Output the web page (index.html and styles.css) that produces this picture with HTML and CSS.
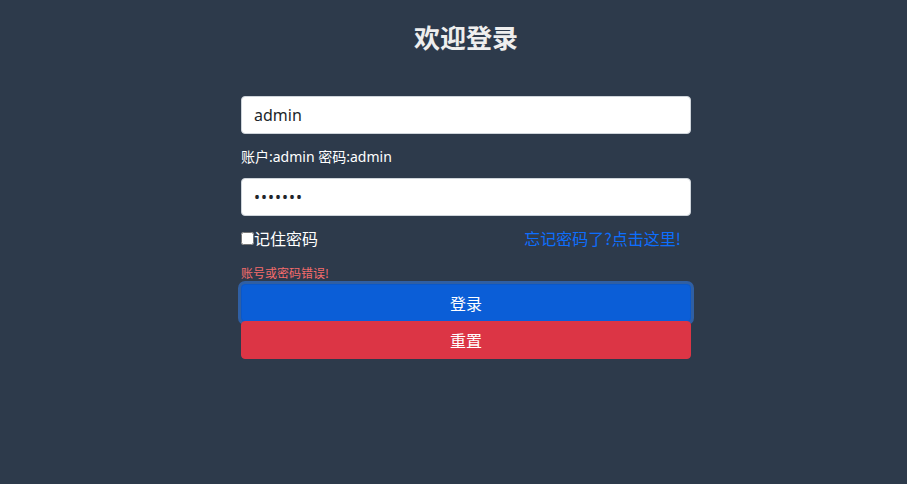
FILE: index.html
```html
<!DOCTYPE html>
<html lang="zh">
<head>
<meta charset="utf-8">
<title>欢迎登录</title>
<link rel="stylesheet" href="styles.css">
</head>
<body>
<div class="login">
  <h1 class="title">欢迎登录</h1>
  <form class="form">
    <input class="field" type="text" value="admin">
    <div class="hint">账户:admin 密码:admin</div>
    <input class="field" type="password" value="1234567">
    <div class="row">
      <label class="remember"><input type="checkbox" class="check">记住密码</label>
      <a class="forgot" href="#">忘记密码了?点击这里!</a>
    </div>
    <div class="error">账号或密码错误!</div>
    <button type="button" class="btn btn-primary">登录</button>
    <button type="button" class="btn btn-danger">重置</button>
  </form>
</div>
</body>
</html>
```
FILE: styles.css
```css
html, body {
  margin: 0;
  height: 100%;
  background: #2d3a4b;
  font-family: "Segoe UI", "Noto Sans", "Noto Sans CJK SC", sans-serif;
  color: #fff;
}
.login {
  width: 450px;
  margin-left: 241px;
  padding-top: 19px;
}
.title {
  margin: 0;
  text-align: center;
  font-size: 26px;
  line-height: 36px;
  font-weight: 700;
  color: #eee;
  font-family: "Noto Sans CJK SC", sans-serif;
}
.form {
  display: flex;
  flex-direction: column;
  margin-top: 41px;
}
.field {
  box-sizing: border-box;
  height: 38px;
  width: 100%;
  border: 1px solid #ced4da;
  border-radius: 4px;
  padding: 0 12px;
  font-size: 16px;
  color: #212529;
  background: #fff;
  font-family: "Segoe UI", "Noto Sans", sans-serif;
  outline: none;
}
.field[type=password] {
  font-size: 16px;
  letter-spacing: 1px;
}
.hint {
  font-size: 14px;
  line-height: 20px;
  margin: 13px 0 11px;
  font-family: "Noto Sans", "Noto Sans CJK SC", sans-serif;
}
.row {
  display: flex;
  justify-content: space-between;
  align-items: center;
  height: 24px;
  margin-top: 10px;
  font-family: "Noto Sans CJK SC", sans-serif;
  font-size: 16px;
}
.remember {
  display: flex;
  align-items: center;
}
.check {
  margin: 0;
  width: 13px;
  height: 13px;
}
.forgot {
  color: #0d6efd;
  text-decoration: none;
  font-size: 16px;
  margin-right: 10px;
}
.error {
  color: #f56c6c;
  font-size: 12px;
  line-height: 16px;
  margin-top: 15px;
  font-family: "Noto Sans CJK SC", sans-serif;
}
.btn {
  height: 38px;
  border: 1px solid transparent;
  border-radius: 4px;
  color: #fff;
  font-size: 16px;
  font-family: "Noto Sans CJK SC", sans-serif;
  cursor: pointer;
}
.btn-primary {
  margin-top: 3px;
  background: #0b5ed7;
  border-color: #0a58ca;
  box-shadow: 0 0 0 3px rgba(49, 132, 253, 0.5);
}
.btn-danger {
  margin-top: -1px;
  background: #dc3545;
  border-color: #dc3545;
}
```
